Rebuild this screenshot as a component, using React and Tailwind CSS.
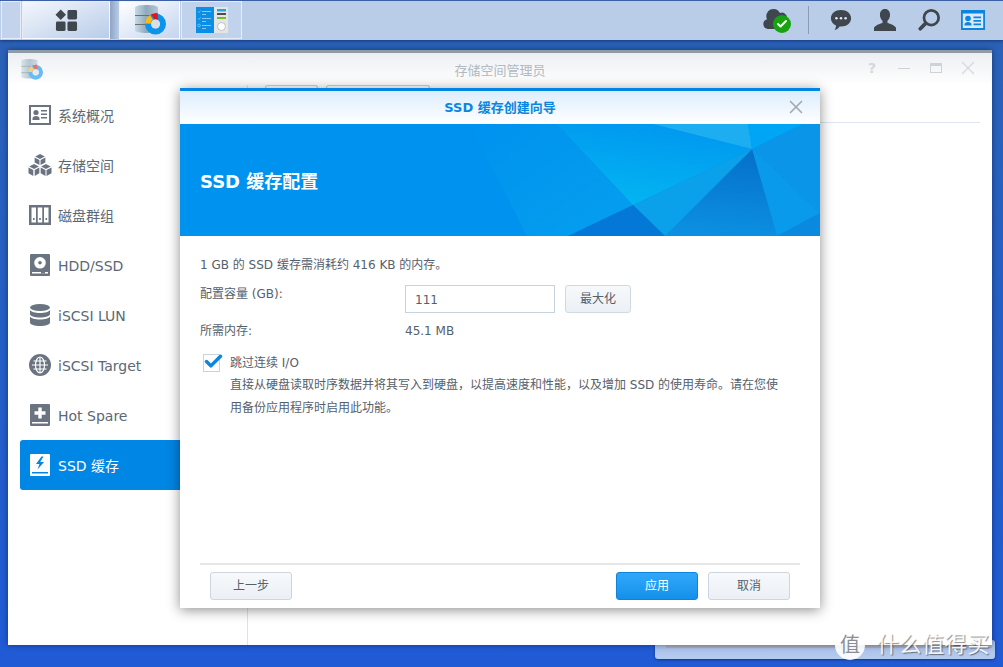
import { Check, X } from "lucide-react";

const FONT = { fontFamily: '"DejaVu Sans", "Noto Sans CJK SC", sans-serif' };

// Sidebar glyphs, solid shapes in the DSM style
const IconOverview = ({ className }) => (
  <svg viewBox="0 0 22 20" className={className} fill="currentColor">
    <path fillRule="evenodd" d="M0 0h22v20H0zM2 2v16h18V2z" />
    <circle cx="7" cy="7.500" r="2.600" />
    <path d="M3.500 15v-1.500c0-1.500 1.500-2.500 3.500-2.500s3.500 1 3.500 2.500V15zM12 5h6v1.600h-6zM12 8.500h6v1.600h-6zM12 12h6v1.600h-6z" />
  </svg>
);

const IconCubes = ({ className }) => (
  <svg viewBox="0 0 24 24" className={className} fill="currentColor">
    <path d="M12 0l5 2.600-5 2.600-5-2.600zM6.400 3.600l5 2.600v5.400l-5-2.800zM17.600 3.600v5.200l-5 2.800V6.200z" />
    <path d="M5.800 10.400l5 2.600-5 2.600-5-2.600zM0 14l5 2.700V23l-5-2.800zM11.300 14v6.200L6.500 23v-6.300z" />
    <path d="M18.200 10.400l5 2.600-5 2.600-5-2.600zM12.700 14l5 2.700V23l-5-2.800zM24 14v6.200L18.800 23v-6.300z" />
  </svg>
);

const IconRaid = ({ className }) => (
  <svg viewBox="0 0 22 20" className={className}>
    <rect width="22" height="20" fill="currentColor" />
    <path d="M2.500 2.500H7v15H2.500zM8.750 2.500h4.500v15h-4.500zM15 2.500h4.500v15H15z" fill="#fff" />
    <path d="M4 13h1.600v2H4zM10.200 13h1.600v2h-1.600zM16.500 13h1.600v2h-1.600z" fill="currentColor" />
  </svg>
);

const IconDisk = ({ className }) => (
  <svg viewBox="0 0 20 22" className={className} fill="currentColor">
    <path fillRule="evenodd" d="M1 0h18a1 1 0 011 1v20a1 1 0 01-1 1H1a1 1 0 01-1-1V1a1 1 0 011-1zm9 3a5.800 5.800 0 100 11.600A5.800 5.800 0 0010 3zm0 4a1.800 1.800 0 110 3.600A1.800 1.800 0 0110 7zM2 18v1.500h16V18z" />
    <path d="M11 18h4v1.500h-4z" />
  </svg>
);

const IconDatabase = ({ className }) => (
  <svg viewBox="0 0 20 22" className={className} fill="currentColor">
    <ellipse cx="10" cy="3.500" rx="10" ry="3.500" />
    <path d="M0 6c1 2 5 3 10 3s9-1 10-3v4c0 2-4.500 3.500-10 3.500S0 12 0 10z" />
    <path d="M0 12.500c1 2 5 3 10 3s9-1 10-3v6c0 2-4.500 3.500-10 3.500S0 20.500 0 18.500z" />
  </svg>
);

const IconGlobe = ({ className }) => (
  <svg viewBox="0 0 22 22" className={className}>
    <circle cx="11" cy="11" r="11" fill="currentColor" />
    <g fill="none" stroke="#fff" strokeWidth="1.200">
      <ellipse cx="11" cy="11" rx="4.500" ry="8" />
      <path d="M11 3v16M3 11h16M4.500 7h13M4.500 15h13" />
    </g>
  </svg>
);

const IconSpare = ({ className }) => (
  <svg viewBox="0 0 20 22" className={className} fill="currentColor">
    <path fillRule="evenodd" d="M1 0h18a1 1 0 011 1v20a1 1 0 01-1 1H1a1 1 0 01-1-1V1a1 1 0 011-1zm7.300 3.500v3.800H4.500v3.400h3.800v3.800h3.400v-3.800h3.800V7.300h-3.800V3.500zM2 18v1.500h16V18z" />
  </svg>
);

const IconCache = ({ className }) => (
  <svg viewBox="0 0 20 22" className={className} fill="currentColor">
    <path fillRule="evenodd" d="M1 0h18a1 1 0 011 1v20a1 1 0 01-1 1H1a1 1 0 01-1-1V1a1 1 0 011-1zm10.500 2.500L6 10h3.500L7.500 15.500 14 8h-3.800L13.500 2.500zM2 18v1.500h16V18z" />
  </svg>
);

// Storage Manager app icon: drum with a coloured ring in front
const StorageAppIcon = ({ className, faded }) => {
  const gradientId = faded ? "drumFaded" : "drumFull";
  return (
    <svg viewBox="0 0 32 30" className={`${className} ${faded ? "opacity-60" : ""}`}>
      <defs>
        <linearGradient id={gradientId} x1="0" x2="1" y1="0" y2="0">
          <stop offset="0" stopColor="#c6dae6" />
          <stop offset="0.5" stopColor="#8fa9bb" />
          <stop offset="1" stopColor="#b4c7d4" />
        </linearGradient>
      </defs>
      <path d="M0 2.500c0-3.300 23-3.300 23 0v23c0 3.300-23 3.300-23 0z" fill={`url(#${gradientId})`} />
      <path d="M0 10.500h23M0 19.500h23" stroke="#6d6f70" strokeWidth="1" />
      <circle cx="20.500" cy="19" r="7.500" fill="none" stroke="#0a94ec" strokeWidth="6" />
      <circle cx="20.500" cy="19" r="4.500" fill="#d8e0e6" />
      <path d="M10 18.500a10.500 10.500 0 015-8.500l3 4.800a5 5 0 00-2.500 3.900z" fill="#fcb813" />
      <path d="M16 9.300l6.500-1.500.5 7a5 5 0 00-3.500-.6z" fill="#e5131b" />
    </svg>
  );
};

const ControlPanelIcon = () => (
  <svg viewBox="0 0 32 26" className="h-[26px] w-8">
    <rect width="32" height="26" fill="#e4e6e6" />
    <rect width="18" height="26" fill="#0a8ee6" />
    <path d="M6 4.500h9M6 7.500h4M6 11.500h9M6 14.500h4M6 18.500h9M6 21.500h4" stroke="#7fcaf7" strokeWidth="1" />
    <path d="M2 4.500l1 1 1.500-2M2 11.500l1 1 1.500-2" stroke="#7fcaf7" fill="none" strokeWidth="0.800" />
    <circle cx="3" cy="18.500" r="1.400" fill="none" stroke="#7fcaf7" strokeWidth="0.800" />
    <path d="M21 2h9v2.500h-9z" fill="#1fa8e0" />
    <path d="M21 6h9v2h-9z" fill="#4a4f52" />
    <path d="M21 10h9v2h-9z" fill="#7ab82e" />
    <circle cx="25.500" cy="19.500" r="4" fill="#fff" stroke="#b9bfc3" />
  </svg>
);

const navItems = [
  { label: "系统概况", Icon: IconOverview, size: "h-5 w-[22px]" },
  { label: "存储空间", Icon: IconCubes, size: "h-[23px] w-6 -ml-px" },
  { label: "磁盘群组", Icon: IconRaid, size: "h-5 w-[22px]" },
  { label: "HDD/SSD", Icon: IconDisk, size: "h-[22px] w-5 ml-px" },
  { label: "iSCSI LUN", Icon: IconDatabase, size: "h-[22px] w-5 ml-px" },
  { label: "iSCSI Target", Icon: IconGlobe, size: "h-[22px] w-[22px]" },
  { label: "Hot Spare", Icon: IconSpare, size: "h-[22px] w-5 ml-px" },
  { label: "SSD 缓存", Icon: IconCache, size: "h-[22px] w-5 ml-px", active: true },
];

const TaskButton = ({ children, className = "" }) => (
  <div className={`flex h-[38px] items-center justify-center border border-white/60 ${className}`}>
    {children}
  </div>
);

const Taskbar = () => (
  <div className="flex h-10 items-start justify-between border-t border-[#3d5fa6] bg-[#b9cde9] pl-px shadow-[0_1px_3px_rgba(0,0,40,0.45)]">
    <div className="flex items-start">
      <TaskButton className="w-5 bg-[#c3d3ec]" />
      <TaskButton className="ml-px w-[88px] bg-gradient-to-br from-[#f4f7fc] to-[#b9cce9]">
        <svg viewBox="0 0 24 24" className="h-[23px] w-[23px]" fill="#3f464e">
          <path d="M6 0.500l5.500 5.500L6 11.500 0.500 6z" />
          <rect x="13" y="1" width="10" height="10" rx="1.500" />
          <rect x="1" y="13" width="10" height="10" rx="1.500" />
          <rect x="13" y="13" width="10" height="10" rx="1.500" />
        </svg>
      </TaskButton>
      <div className="h-[38px] w-[9px] bg-gradient-to-r from-[#8ea3c6] to-[#b9cde9]" />
      <TaskButton className="w-[61px] border-white bg-gradient-to-br from-white to-[#c4d5ee]">
        <StorageAppIcon className="ml-[2px] h-[30px] w-8" />
      </TaskButton>
      <TaskButton className="ml-px w-[61px] bg-[#c0d2ec]">
        <ControlPanelIcon />
      </TaskButton>
    </div>
    <div className="flex h-[38px] items-center pr-[18px]">
      <div className="relative mr-[17px] h-[22px] w-7 -translate-y-px">
        <svg viewBox="0 0 25 22" className="h-[22px] w-[25px]" fill="#3f464e">
          <path d="M5 21a5 5 0 01-1-9.800A7 7 0 0117 5a5 5 0 017 4.500V21z" />
        </svg>
        <span className="absolute right-0 bottom-[-3px] flex h-[18px] w-[18px] items-center justify-center rounded-full bg-[#16a30f]">
          <Check className="h-3 w-3 text-white" strokeWidth={4} />
        </span>
      </div>
      <div className="mr-[21px] h-7 w-px bg-[#8a9bb3]" />
      <svg viewBox="0 0 24 24" className="mr-[22px] h-[22px] w-[22px]" fill="#3f464e">
        <path d="M12 1c6.300 0 11 3.800 11 9s-4.700 9-11 9h-1.500c-1 1.500-3 3.500-5.500 4 1-1.500 1.500-3 1.500-5C3 16.500 1 13.500 1 10c0-5.200 4.700-9 11-9z" />
        <circle cx="7" cy="10" r="1.400" fill="#dfe8f5" />
        <circle cx="12" cy="10" r="1.400" fill="#dfe8f5" />
        <circle cx="17" cy="10" r="1.400" fill="#dfe8f5" />
      </svg>
      <svg viewBox="0 0 24 24" className="mr-[22px] h-[22px] w-[22px]" fill="#3f464e">
        <path d="M12 0c3.600 0 5.500 2.700 5.500 6.200 0 3-1.200 5.300-2.800 6.600v2.400c3 1 8.300 2.500 9.300 5.300V24H0v-3.500c1-2.800 6.300-4.300 9.300-5.300v-2.400C7.700 11.500 6.500 9.200 6.500 6.200 6.500 2.700 8.400 0 12 0z" />
      </svg>
      <svg viewBox="0 0 24 24" className="mr-[21px] h-[22px] w-[22px]" fill="none" stroke="#3f464e">
        <circle cx="14.500" cy="9.500" r="8" strokeWidth="3" />
        <path d="M8 16L2.500 21.500" strokeWidth="4" strokeLinecap="round" />
      </svg>
      <svg viewBox="0 0 24 20" className="h-5 w-6" fill="#0a86e0">
        <rect x="1" y="2" width="22" height="17" fill="#dbe8f8" />
        <path fillRule="evenodd" d="M0 0h24v20H0zM1.800 3.500v14.500h20.400V3.500z" />
        <circle cx="7" cy="8.500" r="2.800" />
        <path d="M3.500 15.500v-1c0-1.500 1.500-2.500 3.500-2.500s3.500 1 3.500 2.500v1zM12.500 6.500h7.500v1.700h-7.500zM12.500 10h7.500v1.700h-7.500zM12.500 13.500h7.500v1.700h-7.500z" />
      </svg>
    </div>
  </div>
);

const Sidebar = () => (
  <div className="w-[240px] shrink-0 border-r border-[#dfe3e8] pt-[5px] pl-3">
    {navItems.map(({ label, Icon, size, active }) => (
      <div
        key={label}
        className={`flex h-[50px] items-center rounded-l-[3px] pl-[9px] text-sm ${
          active ? "bg-[#0086e5] text-white" : "text-[#5c6876]"
        }`}
      >
        <span className={`flex w-[29px] shrink-0 items-center ${active ? "text-white" : "text-[#6a7480]"}`}>
          <Icon className={size} />
        </span>
        <span className="translate-y-px">{label}</span>
      </div>
    ))}
  </div>
);

const StorageWindow = () => (
  <div className="absolute top-[50px] left-2 flex h-[595px] w-[984px] flex-col border-t-[3px] border-[#8f9ca8] bg-white shadow-[0_0_6px_rgba(0,0,40,0.45)]">
    <div className="relative flex h-8 shrink-0 items-center justify-center bg-gradient-to-b from-[#eceff2] to-white pt-[3px] text-[13px] text-[#b3b9bf]">
      <StorageAppIcon className="absolute top-[6px] left-[13px] h-[21px] w-[23px]" faded />
      存储空间管理员
      <div className="absolute top-[10px] right-[18px] flex items-center gap-5 text-[#d4d7db]">
        <span className="w-3 text-center text-sm font-bold leading-[10px]">?</span>
        <span className="h-px w-3 bg-[#cfd3d7]" />
        <span className="h-[10px] w-3 border border-t-[3px] border-[#cfd3d7]" />
        <span className="flex h-[10px] w-3 items-center justify-center">
          <X className="h-[22px] w-[22px] shrink-0" strokeWidth={1.300} />
        </span>
      </div>
    </div>
    <div className="flex min-h-0 flex-1">
      <Sidebar />
      <div className="min-w-0 flex-1 pt-0 pr-3 pl-4">
        <div className="flex h-[38px] items-start gap-2 border-b border-[#dde5ef] pl-px">
          <span className="h-[4px] w-[53px] rounded-t-[3px] border border-b-0 border-[#c6ced8]" />
          <span className="h-[4px] w-[104px] rounded-t-[3px] border border-b-0 border-[#c6ced8]" />
        </div>
      </div>
    </div>
  </div>
);

// Faceted polygons across the wizard banner
const BannerFacets = () => (
  <svg viewBox="0 0 640 112" preserveAspectRatio="none" className="absolute inset-0 h-full w-full">
    <defs>
      <linearGradient id="facetBright" x1="0.8" y1="0" x2="0.5" y2="1">
        <stop offset="0" stopColor="#0096f0" />
        <stop offset="1" stopColor="#03b4f1" />
      </linearGradient>
      <linearGradient id="facetDark" x1="0.6" y1="0" x2="0.5" y2="1">
        <stop offset="0" stopColor="#0470c8" />
        <stop offset="1" stopColor="#0c90e2" />
      </linearGradient>
      <linearGradient id="facetLeft" x1="0" y1="0" x2="1" y2="1">
        <stop offset="0" stopColor="#0092ef" />
        <stop offset="1" stopColor="#059fee" />
      </linearGradient>
    </defs>
    <path d="M290 0L347 112H388L453 81 377 0z" fill="url(#facetLeft)" />
    <path d="M377 0H473L572 25 453 81z" fill="url(#facetBright)" />
    <path d="M473 0H568L572 25z" fill="#1caef0" />
    <path d="M568 0H623L572 25z" fill="#00a6f6" />
    <path d="M623 0H640V89L572 25z" fill="#0a95e8" />
    <path d="M572 25L640 89 597 112z" fill="#0a9aec" />
    <path d="M597 112L640 89V112z" fill="#0a8adf" />
    <path d="M572 25L597 112H485z" fill="url(#facetDark)" />
    <path d="M572 25L485 112 453 81z" fill="#0aa0ea" />
    <path d="M453 81L485 112H388z" fill="#0478d6" />
  </svg>
);

const WizardDialog = () => (
  <div className="absolute top-[88px] left-[180px] flex h-[520px] w-[640px] flex-col border-t-[3px] border-[#0086e5] bg-white shadow-[0_2px_12px_rgba(0,0,0,0.45)]">
    <div className="relative flex h-[33px] shrink-0 items-center justify-center bg-gradient-to-b from-[#dcedfd] to-white text-[13px] font-bold text-[#0a86e0]">
      SSD 缓存创建向导
      <X className="absolute top-[5px] right-[13px] h-[22px] w-[22px] text-[#a3a9ae]" strokeWidth={1.800} />
    </div>
    <div className="relative flex h-[112px] shrink-0 items-center overflow-hidden bg-[#0092ef] pl-5">
      <BannerFacets />
      <h1 className="relative translate-y-px text-[18px] font-bold text-white">SSD 缓存配置</h1>
    </div>
    <div className="flex min-h-0 flex-1 flex-col px-5 pt-[21px] text-xs text-[#55606d]">
      <p className="h-[20px]">1 GB 的 SSD 缓存需消耗约 416 KB 的内存。</p>
      <div className="mt-2 flex items-start">
        <span className="w-[205px] pt-[1px]">配置容量 (GB):</span>
        <div className="flex h-7 w-[150px] items-center border border-[#c8d3e0] pt-[2px] pl-[9px]">111</div>
        <button className="ml-[10px] h-7 w-[66px] rounded-[3px] border border-[#d0dae5] bg-gradient-to-b from-[#f7f9fb] to-[#ebf0f5]">最大化</button>
      </div>
      <div className="mt-[8px] flex h-5 items-center">
        <span className="w-[205px]">所需内存:</span>
        <span>45.1 MB</span>
      </div>
      <div className="mt-3 flex h-5 items-center">
        <span className="relative mr-[8px] ml-[3px] h-[18px] w-[17px] shrink-0 border border-[#c8d3e0]">
          <Check className="absolute -top-[4px] -left-[1px] h-[21px] w-[21px] text-[#0a86e0]" strokeWidth={4} />
        </span>
        <span className="ml-[2px]">跳过连续 I/O</span>
      </div>
      <p className="mt-[1px] ml-[30px] w-[552px] leading-[23px]">
        直接从硬盘读取时序数据并将其写入到硬盘，以提高速度和性能，以及增加 SSD 的使用寿命。请在您使用备份应用程序时启用此功能。
      </p>
      <div className="mt-auto flex h-[45px] shrink-0 items-end justify-between border-t-2 border-[#e6e6e6] px-[10px] pb-[8px]">
        <button className="h-7 w-[82px] rounded-[3px] border border-[#ccd6e1] bg-gradient-to-b from-[#f7f9fb] to-[#ebf0f5]">上一步</button>
        <div className="flex gap-[10px]">
          <button className="h-7 w-[82px] rounded-[3px] border border-[#0f82da] bg-gradient-to-b from-[#2fa8fb] to-[#1490eb] text-white">应用</button>
          <button className="h-7 w-[82px] rounded-[3px] border border-[#ccd6e1] bg-gradient-to-b from-[#f7f9fb] to-[#ebf0f5]">取消</button>
        </div>
      </div>
    </div>
  </div>
);

export default function App() {
  return (
    <div style={FONT} className="relative h-[667px] w-[1003px] overflow-hidden bg-gradient-to-b from-[#2b62b5] to-[#205bd6]">
      <Taskbar />
      {/* window peeking out behind the main one */}
      <div className="absolute top-[640px] left-[655px] h-[19px] w-[340px] rounded-[3px] bg-gradient-to-b from-[#a4bce6] to-[#b6cbf0] shadow-[0_1px_3px_rgba(0,0,0,0.4)]">
        <div className="ml-[11px] h-[8px] w-[326px] border-b-[3px] border-[#aab0b8] bg-white" />
      </div>
      <StorageWindow />
      <WizardDialog />
      {/* site watermark */}
      <div className="absolute top-[628px] left-[835px] flex items-center text-[22px] text-white/90 [text-shadow:1px_1px_1px_rgba(0,0,0,0.45)]">
        <span className="flex h-[30px] w-[30px] items-center justify-center rounded-full bg-white/90 text-[20px] text-[#8a8f96] [text-shadow:none]">值</span>
        <span className="ml-3 tracking-[0.6px]">什么值得买</span>
      </div>
    </div>
  );
}
